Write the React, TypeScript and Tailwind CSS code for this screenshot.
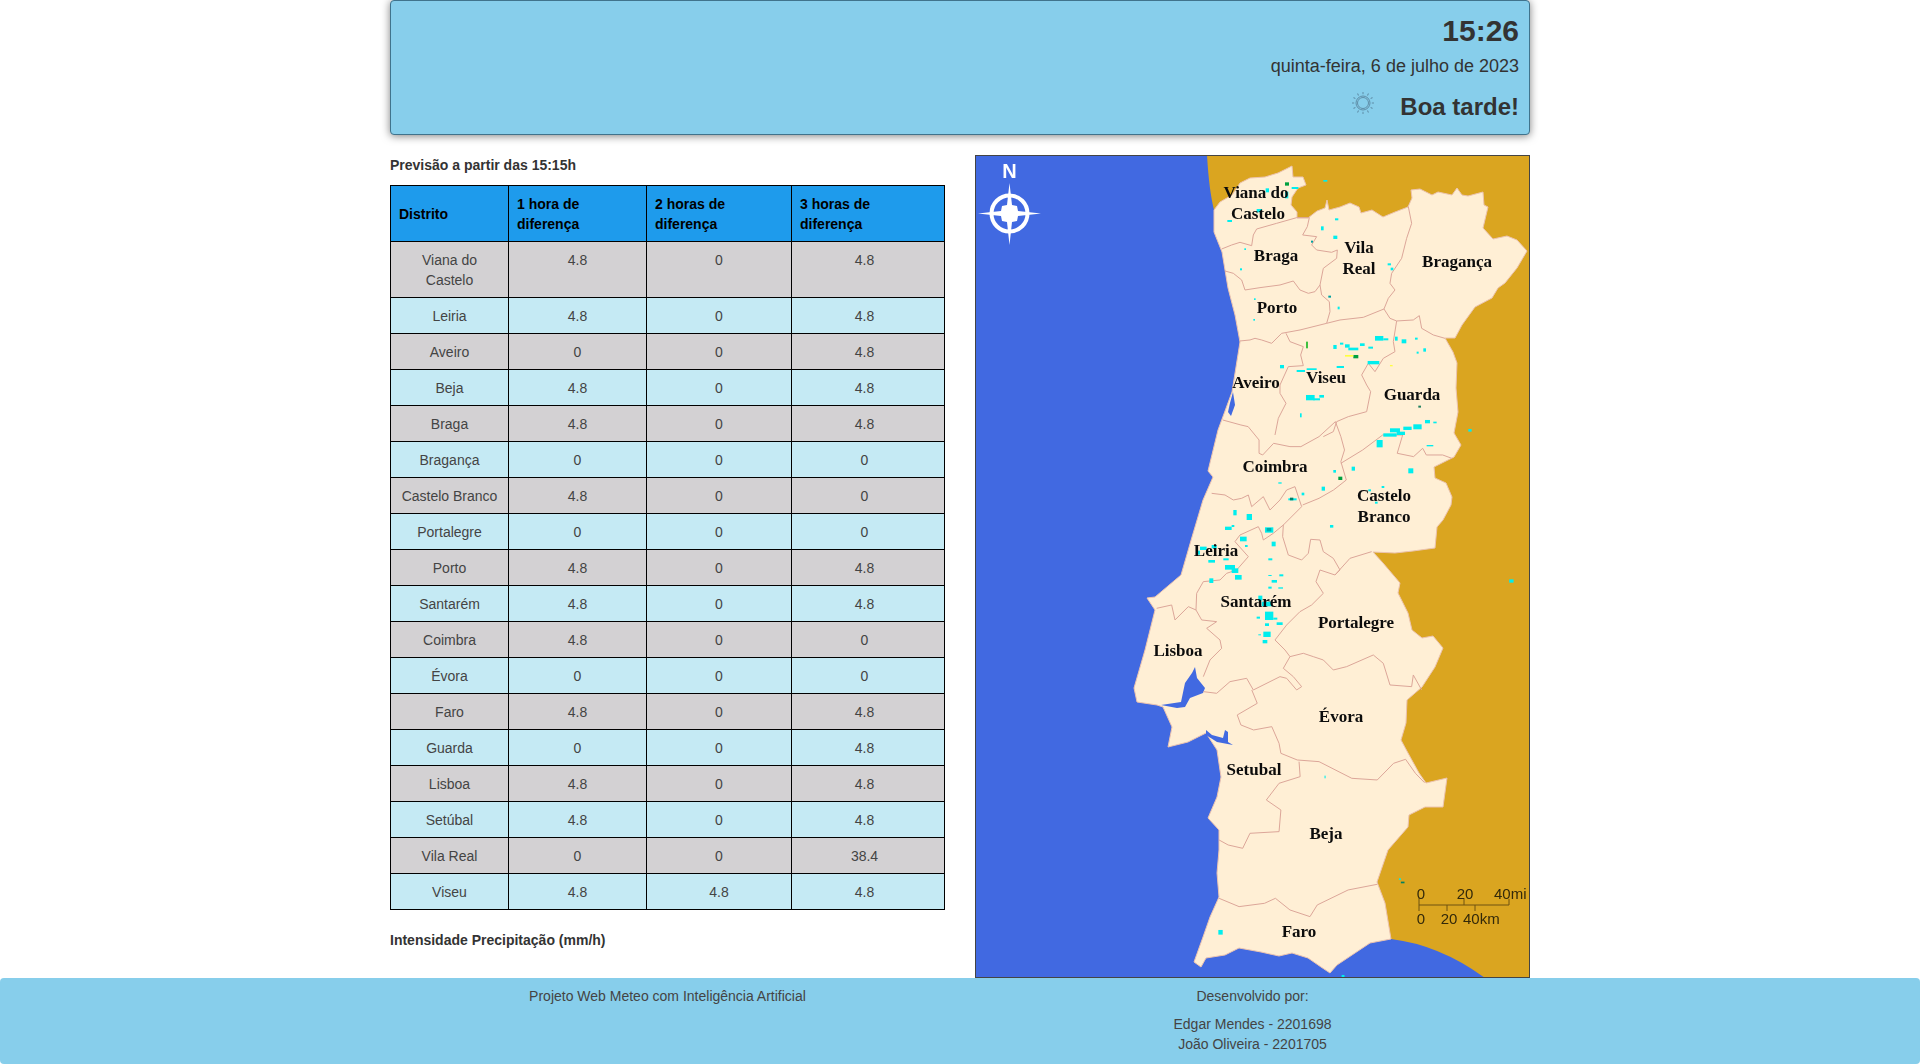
const rows: [string, string, string, string][] = [
  ['Viana do Castelo', '4.8', '0', '4.8'],
  ['Leiria', '4.8', '0', '4.8'],
  ['Aveiro', '0', '0', '4.8'],
  ['Beja', '4.8', '0', '4.8'],
  ['Braga', '4.8', '0', '4.8'],
  ['Bragança', '0', '0', '0'],
  ['Castelo Branco', '4.8', '0', '0'],
  ['Portalegre', '0', '0', '0'],
  ['Porto', '4.8', '0', '4.8'],
  ['Santarém', '4.8', '0', '4.8'],
  ['Coimbra', '4.8', '0', '0'],
  ['Évora', '0', '0', '0'],
  ['Faro', '4.8', '0', '4.8'],
  ['Guarda', '0', '0', '4.8'],
  ['Lisboa', '4.8', '0', '4.8'],
  ['Setúbal', '4.8', '0', '4.8'],
  ['Vila Real', '0', '0', '38.4'],
  ['Viseu', '4.8', '4.8', '4.8'],
]

const land =
  '1214,210 1220,202 1232,195 1240,183 1250,178 1265,177 1278,173 1292,166 1293,177 1303,177 1306,185 1298,188 1292,197 1291,205 1297,212 1297,218 1308,218 1317,211 1325,208 1327,200 1329,210 1340,207 1350,203 1359,207 1361,213 1372,210 1383,217 1395,212 1408,207 1412,198 1411,190 1420,189 1432,195 1438,192 1452,195 1457,188 1462,195 1468,196 1483,192 1484,205 1488,207 1483,228 1493,239 1507,236 1517,240 1527,251 1517,268 1505,283 1498,288 1492,298 1475,307 1462,325 1455,338 1445,338 1453,352 1457,363 1456,388 1458,412 1454,433 1461,445 1454,457 1434,467 1435,478 1446,483 1452,497 1451,505 1443,520 1437,527 1435,548 1413,551 1395,553 1373,552 1383,563 1400,583 1398,593 1408,613 1412,630 1422,638 1433,636 1443,648 1435,667 1422,687 1407,700 1406,723 1401,740 1408,753 1419,773 1426,783 1447,778 1443,807 1425,807 1409,815 1408,827 1388,850 1377,882 1385,903 1391,939 1370,943 1355,953 1337,965 1330,973 1321,967 1308,958 1292,953 1279,956 1261,952 1239,948 1225,955 1206,958 1201,967 1194,962 1203,937 1210,917 1219,897 1217,873 1219,850 1219,830 1208,818 1217,797 1221,777 1217,750 1206,733 1188,742 1168,747 1172,727 1163,707 1157,705 1137,702 1134,688 1145,650 1155,610 1147,598 1155,597 1181,575 1192,537 1203,500 1213,477 1208,471 1218,430 1232,392 1240,342 1235,315 1228,288 1222,252 1214,232'

const bordersA = [
  '65,282 95,270 120,262 155,272 160,240 170,222 230,205 290,188 328,188 322,215 308,240 350,245 335,270 350,285 395,292 412,285 410,310 370,340 360,390 345,410 325,415 300,405 280,378 240,390 180,398 135,405 125,375 100,355 75,348',
  '625,155 635,205 620,250 605,310 575,355 570,385 585,405 565,430 552,462',
  '360,390 365,420 388,440 390,470 380,505',
  '120,558 150,555 165,550 185,555 215,565 245,535 300,525 380,505 420,495 490,487 552,462 570,490 590,498 640,495 658,482 665,520 700,540 735,550',
  '258,535 270,560 310,575 302,600 310,632 265,635 240,690 240,715 258,745 235,790 225,840',
  '590,498 580,560 585,590 550,610 525,650 505,625 485,660 500,690 512,710 500,770 445,785 410,800 400,830 370,845',
]

const bordersB = [
  '695,810 745,825 765,830 795,870 795,910 805,915 835,880',
  '835,880 880,890 910,890 960,860 1005,815 1020,860 1030,900 1020,935 1035,990 1000,1020 960,1045 915,1065',
  '1020,940 1080,900 1135,855 1190,855 1175,910 1220,920 1245,895 1255,915 1300,915 1325,925',
]

const bordersC = [
  '275,190 315,195 340,210 365,205 385,195 395,230 430,200 450,240 480,210 500,180 525,170 545,230 490,285 488,320 505,375 545,390 565,370 572,328 600,330 610,365 640,385 660,420 645,435 600,420 588,455 610,490 575,525 540,545 500,585 465,630 495,660 510,680 490,715 520,740 545,770 530,780 500,745 480,740 400,780 380,745 330,755 290,790 250,785',
  '490,285 460,310 430,330 425,310 415,290 360,315 345,335 385,380 350,420 320,430 300,450 250,455 230,490 228,540',
  '110,535 155,525 165,570 205,530 228,540 245,570 290,575 260,595 300,630 305,655 270,690 250,740',
  '645,435 690,385 755,365',
  '510,680 550,670 580,680 610,690 640,720 680,710 760,675 790,700 810,765 875,770 880,735 905,780',
]

const bordersD = [
  '775,420 790,460 735,495 745,525 780,540 830,530 850,580 855,610 900,630 960,635 1050,685 1120,690 1165,640 1198,628 1225,670 1250,698',
  '905,635 908,680 850,700 815,750 855,780 850,845 770,850 750,895 710,885 685,870',
  '685,1045 740,1070 810,1060 840,1045 880,1080 935,1100 955,1065 1040,1020 1120,1003',
]

// rain speckles, x y w h, in the crop units of each group
const rainA = [
  [82, 195, 14, 6], [170, 162, 16, 10], [197, 100, 10, 12], [255, 110, 10, 20], [275, 96, 20, 6], [370, 75, 12, 5], [405, 190, 10, 6], [363, 214, 8, 12], [400, 242, 12, 10], [563, 325, 10, 6], [572, 338, 8, 8], [413, 455, 6, 8], [162, 430, 5, 5], [160, 492, 5, 5], [120, 340, 6, 6], [133, 280, 5, 5], [525, 543, 25, 14], [550, 550, 15, 6], [585, 545, 8, 12], [605, 553, 14, 12], [645, 548, 8, 6], [670, 580, 8, 10], [650, 590, 6, 6], [420, 563, 10, 6], [435, 568, 14, 10], [445, 578, 30, 8], [480, 565, 14, 8], [505, 575, 14, 6], [400, 570, 10, 12], [503, 618, 35, 10], [318, 720, 26, 16], [340, 730, 20, 6], [358, 720, 14, 8], [290, 645, 25, 6], [240, 630, 12, 10], [320, 640, 30, 5], [410, 633, 22, 6], [570, 820, 30, 12], [610, 815, 25, 10], [640, 808, 25, 15], [675, 795, 15, 10], [700, 800, 10, 5], [805, 822, 10, 8], [300, 775, 5, 12],
]
const rainB = [
  [770, 30, 18, 22], [790, 10, 40, 10], [830, 5, 25, 10], [920, 45, 20, 4], [865, 115, 15, 15], [785, 168, 8, 6], [745, 178, 8, 6], [765, 215, 8, 6], [630, 285, 10, 8], [695, 110, 10, 12], [640, 120, 8, 8], [605, 170, 10, 12], [545, 188, 8, 8], [505, 205, 25, 6], [475, 157, 10, 4], [340, 240, 10, 16], [380, 252, 16, 18], [315, 290, 20, 10], [335, 285, 8, 6], [360, 320, 20, 14], [435, 292, 25, 16], [455, 335, 12, 14], [375, 345, 8, 6], [240, 350, 20, 10], [230, 362, 10, 12], [275, 345, 15, 10], [265, 390, 20, 8], [310, 385, 16, 6], [315, 405, 30, 14], [335, 415, 20, 14], [345, 435, 20, 14], [268, 445, 12, 14], [445, 385, 12, 6], [445, 435, 10, 3], [478, 433, 12, 6], [455, 450, 16, 8], [445, 470, 10, 6], [475, 472, 14, 4], [415, 497, 12, 15], [425, 515, 30, 14], [435, 545, 25, 25], [410, 560, 10, 6], [460, 563, 12, 6], [470, 577, 18, 8], [435, 580, 12, 8], [430, 605, 22, 16], [415, 613, 8, 3], [428, 630, 14, 10],
]
const rainC = [
  [1483, 88, 12, 10], [975, 677, 3, 8], [683, 1140, 12, 14], [1180, 985, 5, 5], [1022, 1275, 8, 8],
]

const labels: [string, number, number][] = [
  ['Viana do', 1256, 198], ['Castelo', 1258, 219], ['Braga', 1276, 261], ['Vila', 1359, 253], ['Real', 1359, 274],
  ['Bragança', 1457, 267], ['Porto', 1277, 313], ['Aveiro', 1256, 388], ['Viseu', 1326, 383], ['Guarda', 1412, 400],
  ['Coimbra', 1275, 472], ['Castelo', 1384, 501], ['Branco', 1384, 522], ['Leiria', 1216, 556], ['Santarém', 1256, 607],
  ['Portalegre', 1356, 628], ['Lisboa', 1178, 656], ['Évora', 1341, 722], ['Setubal', 1254, 775], ['Beja', 1326, 839], ['Faro', 1299, 937],
]

function Borders({ items }: { items: string[] }) {
  return (
    <>
      {items.map((points) => (
        <polyline key={points} points={points} fill="none" stroke="#dca699" strokeWidth="1" vectorEffect="non-scaling-stroke" />
      ))}
    </>
  )
}

function Rain({ items }: { items: number[][] }) {
  return (
    <>
      {items.map(([x, y, w, h]) => (
        <rect key={`${x}-${y}`} x={x} y={y} width={w} height={h} fill="#00eeee" />
      ))}
    </>
  )
}

function MapPortugal() {
  return (
    <svg viewBox="976 156 553 821" className="block h-full w-full blur-[0.4px]">
      <rect x="976" y="156" width="553" height="821" fill="#4169e1" />
      <path d="M1207 155 L1530 155 L1530 978 L1485 978 Q1440 945 1391 939 L1214 210 Q1209 190 1207 155 Z" fill="#daa520" />
      <polygon points={land} fill="#ffefd5" stroke="#ecc4b0" strokeWidth="1" />
      <polygon points="1195,667 1197,678 1205,688 1203,693 1190,698 1185,707 1177,708 1161,705 1181,702 1185,683 1192,673" fill="#4169e1" />
      <polygon points="1206,730 1212,735 1223,738 1225,730 1228,732 1228,742 1233,745 1217,742 1206,735" fill="#4169e1" />
      <polygon points="1233,392 1235,405 1231,416 1228,412 1230,403" fill="#4169e1" />

      <g transform="translate(1200 155) scale(0.3333)">
        <Borders items={bordersA} />
        <Rain items={rainA} />
        <rect x="255" y="82" width="12" height="10" fill="#00a040" />
        <rect x="460" y="600" width="15" height="10" fill="#00a040" />
        <rect x="435" y="600" width="25" height="5" fill="#ffff40" />
        <rect x="318" y="560" width="6" height="20" fill="#40c040" />
        <rect x="570" y="630" width="8" height="4" fill="#ffff40" />
        <rect x="655" y="752" width="8" height="6" fill="#208060" />
        <rect x="333" y="257" width="6" height="6" fill="#00a0a0" />
        <rect x="385" y="422" width="8" height="6" fill="#00a0a0" />
      </g>
      <g transform="translate(970 150) scale(0.3636 0.3333)">
        <Borders items={bordersB} />
      </g>
      <g transform="translate(1120 430) scale(0.3333)">
        <Borders items={bordersC} />
        <Rain items={rainB} />
        <rect x="655" y="140" width="12" height="10" fill="#00a040" />
        <rect x="510" y="203" width="10" height="8" fill="#00806a" />
        <rect x="440" y="294" width="14" height="10" fill="#00b0b0" />
      </g>
      <g transform="translate(970 550) scale(0.3636 0.3333)">
        <Borders items={bordersD} />
        <Rain items={rainC} />
        <rect x="1185" y="995" width="10" height="5" fill="#008060" />
      </g>

      {labels.map(([text, x, y]) => (
        <text key={`${text}-${x}`} x={x} y={y} textAnchor="middle" fontFamily="'Liberation Serif', serif" fontWeight="700" fontSize="17" fill="#0c0c0c">
          {text}
        </text>
      ))}

      {/* compass */}
      <text x="1009.5" y="178" textAnchor="middle" fontFamily="'Liberation Sans', sans-serif" fontWeight="700" fontSize="20" fill="#ffffff">N</text>
      <circle cx="1009.5" cy="213.5" r="18" fill="none" stroke="#ffffff" strokeWidth="4" />
      <polygon points="1009.5,183 1012,205 1017,206 1018,211 1041,213.5 1018,216 1017,221 1012,222 1009.5,245 1007,222 1002,221 1001,216 978,213.5 1001,211 1002,206 1007,205" fill="#ffffff" />

      {/* scale bar */}
      <g stroke="#6e5210" strokeWidth="1" fill="none">
        <path d="M1419 905 H1509 M1419 898 V911 M1464 899 V905 M1509 899 V905 M1447 905 V911 M1475 905 V911" />
      </g>
      <g fontFamily="'Liberation Sans', sans-serif" fontSize="15" fill="#33290a">
        <text x="1421" y="899" textAnchor="middle">0</text>
        <text x="1465" y="899" textAnchor="middle">20</text>
        <text x="1494" y="899">40mi</text>
        <text x="1421" y="924" textAnchor="middle">0</text>
        <text x="1449" y="924" textAnchor="middle">20</text>
        <text x="1463" y="924">40km</text>
      </g>
    </svg>
  )
}

function SunIcon() {
  const rays = [0, 30, 60, 90, 120, 150, 180, 210, 240, 270, 300, 330]
  return (
    <svg viewBox="0 0 24 24" className="mb-2 mr-[25px] h-6 w-6" fill="none" stroke="#5f8ea8" strokeWidth="1">
      <circle cx="12" cy="12" r="7" />
      <circle cx="12" cy="12" r="5.5" />
      {rays.map((r) => (
        <line key={r} x1="12" y1="1" x2="12" y2="3.2" transform={`rotate(${r} 12 12)`} />
      ))}
    </svg>
  )
}

export default function App() {
  return (
    <div className="h-[1064px] overflow-hidden bg-white font-['Liberation_Sans',Arial,sans-serif] text-sm leading-5 text-[#333333]">
      <div className="mx-auto w-[1140px]">
        {/* Header */}
        <header className="flex h-[135px] flex-col items-end rounded border border-[#40738c] bg-[#87ceeb] pr-[10px] pt-3 shadow-[0_1px_8px_rgba(0,0,0,0.5)]">
          <div className="text-[30px] font-bold leading-9">15:26</div>
          <div className="mt-[5px] text-lg leading-6">quinta-feira, 6 de julho de 2023</div>
          <div className="mt-[13px] flex items-center">
            <SunIcon />
            <div className="text-2xl font-bold leading-8">Boa tarde!</div>
          </div>
        </header>

        <div className="mt-5 flex gap-[30px]">
          {/* Table */}
          <div className="w-[555px]">
            <p className="mb-[10px] font-bold">Previsão a partir das 15:15h</p>
            <table className="w-[554px] table-fixed border-collapse border border-black">
              <colgroup>
                <col className="w-[118px]" />
                <col className="w-[138px]" />
                <col className="w-[145px]" />
                <col className="w-[153px]" />
              </colgroup>
              <thead>
                <tr className="h-[56px] bg-[#1e9bec] text-left font-bold text-black">
                  <th className="border border-black px-2 py-[7px]">Distrito</th>
                  <th className="border border-black px-2 py-[7px]">1 hora de diferença</th>
                  <th className="border border-black px-2 py-[7px]">2 horas de diferença</th>
                  <th className="border border-black py-[7px] pl-2 pr-[15px]">3 horas de diferença</th>
                </tr>
              </thead>
              <tbody>
                {rows.map((row, i) => (
                  <tr key={row[0]} className={i % 2 === 0 ? 'bg-[#d3d1d3]' : 'bg-[#c5eaf4]'}>
                    {row.map((cell, j) => (
                      <td
                        key={j}
                        className={
                          j === 3
                            ? 'border border-black pb-[7px] pl-2 pr-[15px] pt-2 text-center align-top text-[#444444]'
                            : 'border border-black px-2 pb-[7px] pt-2 text-center align-top text-[#444444]'
                        }
                      >
                        {cell}
                      </td>
                    ))}
                  </tr>
                ))}
              </tbody>
            </table>
            <p className="mt-5 font-bold">Intensidade Precipitação (mm/h)</p>
          </div>

          {/* Map */}
          <div className="h-[823px] w-[555px] border border-[#444444]">
            <MapPortugal />
          </div>
        </div>
      </div>

      {/* Footer */}
      <footer className="h-[86px] rounded bg-[#87ceeb] pt-2">
        <div className="mx-auto flex w-[1140px] gap-[30px] text-center text-[#444444]">
          <div className="w-[555px]">Projeto Web Meteo com Inteligência Artificial</div>
          <div className="w-[555px]">
            <div className="mb-2">Desenvolvido por:</div>
            <div>Edgar Mendes - 2201698</div>
            <div>João Oliveira - 2201705</div>
          </div>
        </div>
      </footer>
    </div>
  )
}
